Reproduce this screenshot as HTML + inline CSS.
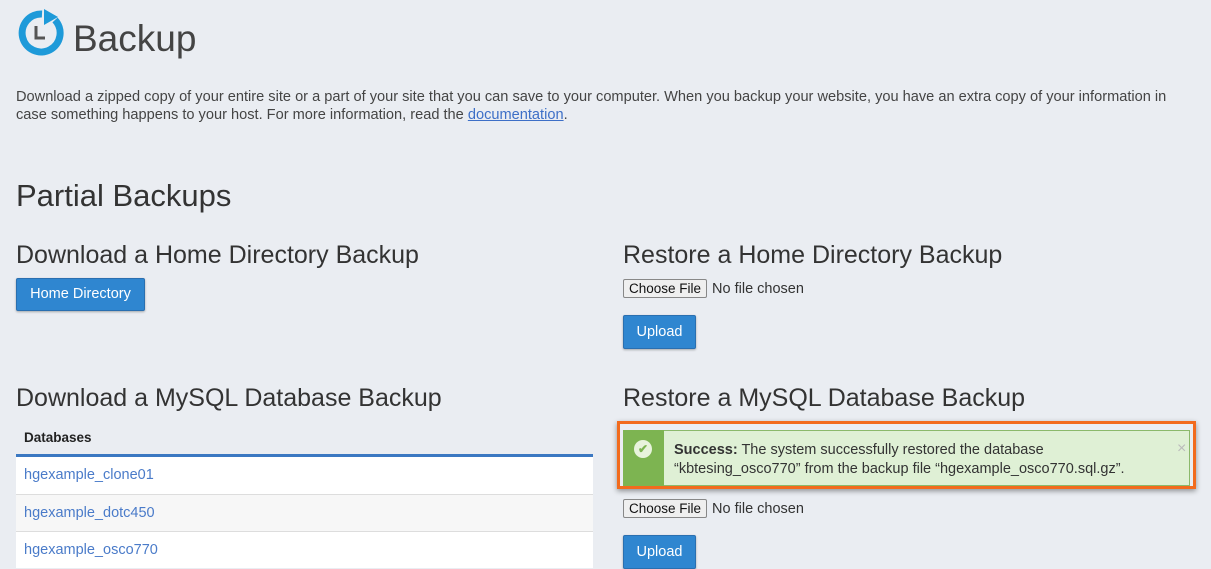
<!DOCTYPE html>
<html><head><style>
body{margin:0;width:1211px;height:565px;overflow:hidden;background:#eaedf2;font-family:"Liberation Sans",sans-serif;color:#333;position:relative}
.a{position:absolute;white-space:nowrap}
.btn{position:absolute;background:#2f86d0;color:#fff;font-size:14.5px;border:1px solid #2a6fb0;border-radius:2px;box-shadow:0 1px 2px rgba(0,0,0,.3);text-align:center;box-sizing:border-box}
.cf{position:absolute;font-size:14.5px;color:#333}
.cf span{display:inline-block;border:1px solid #888;background:#efefef;border-radius:2px;padding:1px 5px;font-size:13.5px;color:#111;margin-right:5px}
.row{position:absolute;left:16px;width:577px;height:37px;box-sizing:border-box;border-top:1px solid #ddd;font-size:14.5px;color:#4a7bc9;padding:10px 8px}
.h3{position:absolute;white-space:nowrap;font-size:25px;color:#333}
</style></head><body>
<svg class="a" style="left:14px;top:8px" width="50" height="50" viewBox="0 0 50 50">
<path d="M28 6 A19 19 0 1 0 41 12" fill="none" stroke="#1e9ad9" stroke-width="7"/>
<polygon points="30,1 44,9 30,17" fill="#1e9ad9"/>
<path d="M22 18 V30 H31" fill="none" stroke="#555" stroke-width="3"/>
</svg>
<div class="a" style="left:73px;top:18px;font-size:37px;color:#444">Backup</div>
<div class="a" style="left:16px;top:88px;font-size:14.6px;line-height:18px;white-space:normal;width:1185px;color:#444">Download a zipped copy of your entire site or a part of your site that you can save to your computer. When you backup your website, you have an extra copy of your information in case something happens to your host. For more information, read the <span style="color:#3d6fc7;text-decoration:underline">documentation</span>.</div>
<div class="a" style="left:16px;top:178px;font-size:31px;color:#333">Partial Backups</div>
<div class="h3" style="left:16px;top:241px">Download a Home Directory Backup</div>
<div class="h3" style="left:623px;top:241px">Restore a Home Directory Backup</div>
<div class="btn" style="left:16px;top:278px;width:129px;height:33px;line-height:31px">Home Directory</div>
<div class="cf" style="left:623px;top:279px"><span>Choose File</span>No file chosen</div>
<div class="btn" style="left:623px;top:315px;width:73px;height:34px;line-height:32px">Upload</div>
<div class="h3" style="left:16px;top:384px">Download a MySQL Database Backup</div>
<div class="h3" style="left:623px;top:384px">Restore a MySQL Database Backup</div>
<div class="a" style="left:24px;top:430px;font-size:13.5px;font-weight:bold;color:#222">Databases</div>
<div class="a" style="left:16px;top:454px;width:577px;height:3px;background:#3b78c2"></div>
<div class="row" style="top:457px;background:#fff;border-top:none">hgexample_clone01</div>
<div class="row" style="top:494px;background:#f7f7f7">hgexample_dotc450</div>
<div class="row" style="top:531px;background:#fff">hgexample_osco770</div>
<div class="a" style="left:617px;top:421px;width:573px;height:62px;border:3px solid #f26b1d;box-shadow:0 2px 5px rgba(0,0,0,.4)"></div>
<div class="a" style="left:623px;top:430px;width:567px;height:56px;background:#dff0d5;border:1px solid #8bb96b;box-sizing:border-box"></div>
<div class="a" style="left:623px;top:430px;width:41px;height:56px;background:#7db451"></div>
<div class="a" style="left:634px;top:440px;width:18px;height:18px;border-radius:50%;background:#e8f3dc;color:#7db451;font-size:12px;text-align:center;line-height:18px;font-weight:bold">✔</div>
<div class="a" style="left:674px;top:441px;font-size:14.5px;line-height:19px;color:#333"><b>Success:</b> The system successfully restored the database<br>“kbtesing_osco770” from the backup file “hgexample_osco770.sql.gz”.</div>
<div class="a" style="left:1177px;top:440px;font-size:16px;color:#bbb">×</div>
<div class="cf" style="left:623px;top:499px"><span>Choose File</span>No file chosen</div>
<div class="btn" style="left:623px;top:535px;width:73px;height:34px;line-height:32px">Upload</div>
</body></html>
